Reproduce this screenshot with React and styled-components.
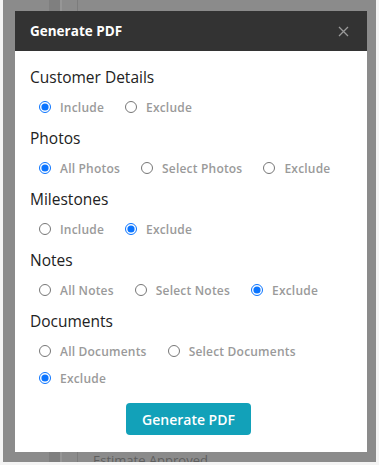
import styled, { createGlobalStyle } from "styled-components";

const Global = createGlobalStyle`
  html, body { margin: 0; padding: 0; background: #f4f4f4; }
  body { font-family: "Open Sans", "Noto Sans", sans-serif; }
`;

const Frame = styled.div`
  width: 379px;
  height: 465px;
  box-sizing: border-box;
  padding: 0 3px 3px 3px;
  background: #f4f4f4;
`;

const Backdrop = styled.div`
  position: relative;
  height: 100%;
  background: #8b8b8b;
  overflow: hidden;
  display: grid;
  grid-template-columns: 46px 13px 15px 1px 1fr;
`;

const Rail = styled.div`
  background: #7f7f7f;
  border-right: 2px solid #969696;
`;

const Line = styled.div`
  background: #7c7c7c;
`;

const BehindMain = styled.div`
  display: flex;
  align-items: flex-end;
  padding-left: 15px;
`;

const BehindText = styled.span`
  font-size: 13px;
  line-height: 16px;
  color: #5e5e5e;
  transform: translateY(6px);
`;

const Modal = styled.div`
  position: absolute;
  top: 11px;
  left: 12px;
  width: 352px;
  height: 441px;
  background: #fff;
  display: flex;
  flex-direction: column;
`;

const Header = styled.div`
  height: 41px;
  background: #333;
  display: flex;
  align-items: center;
  justify-content: space-between;
  padding: 0 16px 0 15px;
`;

const Title = styled.h2`
  margin: 0;
  font-size: 13.5px;
  font-weight: 700;
  color: #fff;
`;

const Close = styled.button`
  border: 0;
  background: none;
  padding: 0;
  width: 16px;
  height: 16px;
  display: flex;
  align-items: center;
  justify-content: center;
`;

const Body = styled.div`
  padding: 14px 20px 17px 15px;
  display: flex;
  flex-direction: column;
`;

const Section = styled.div`
  margin-bottom: 9px;
`;

const Heading = styled.h3`
  margin: 0;
  font-size: 15.5px;
  line-height: 24px;
  font-weight: 400;
  color: #222;
`;

const Options = styled.div`
  display: flex;
  flex-wrap: wrap;
  row-gap: 7px;
  column-gap: 21px;
  margin-top: 8px;
  padding-left: 9px;
`;

const Option = styled.label`
  display: flex;
  align-items: center;
  gap: 9px;
  height: 20px;
  font-size: 12px;
  font-weight: 600;
  color: #9a9a9a;
  letter-spacing: 0.2px;
`;

const Radio = styled.input`
  width: 12px;
  height: 12px;
  margin: 0;
  accent-color: #0a74ff;
`;

const Footer = styled.div`
  display: flex;
  justify-content: center;
  margin-top: 6px;
`;

const Button = styled.button`
  width: 125px;
  height: 32px;
  border: 0;
  border-radius: 4px;
  background: #12a1b9;
  color: #fff;
  font-family: "Open Sans", sans-serif;
  font-size: 14px;
  font-weight: 600;
`;

const sections = [
  { title: "Customer Details", options: ["Include", "Exclude"], checked: 0 },
  { title: "Photos", options: ["All Photos", "Select Photos", "Exclude"], checked: 0 },
  { title: "Milestones", options: ["Include", "Exclude"], checked: 1 },
  { title: "Notes", options: ["All Notes", "Select Notes", "Exclude"], checked: 2 },
  { title: "Documents", options: ["All Documents", "Select Documents", "Exclude"], checked: 2 },
];

export default function App() {
  return (
    <>
      <Global />
      <Frame>
        <Backdrop>
          <div />
          <Rail />
          <div />
          <Line />
          <BehindMain>
            <BehindText>Estimate Approved</BehindText>
          </BehindMain>
          <Modal>
            <Header>
              <Title>Generate PDF</Title>
              <Close aria-label="close">
                <svg width="11" height="11" viewBox="0 0 11 11">
                  <path d="M1 1L10 10M10 1L1 10" stroke="#9a9a9a" strokeWidth="1.3" />
                </svg>
              </Close>
            </Header>
            <Body>
              {sections.map((s) => (
                <Section key={s.title}>
                  <Heading>{s.title}</Heading>
                  <Options>
                    {s.options.map((o, i) => (
                      <Option key={o}>
                        <Radio type="radio" name={s.title} defaultChecked={i === s.checked} />
                        {o}
                      </Option>
                    ))}
                  </Options>
                </Section>
              ))}
              <Footer>
                <Button>Generate PDF</Button>
              </Footer>
            </Body>
          </Modal>
        </Backdrop>
      </Frame>
    </>
  );
}
